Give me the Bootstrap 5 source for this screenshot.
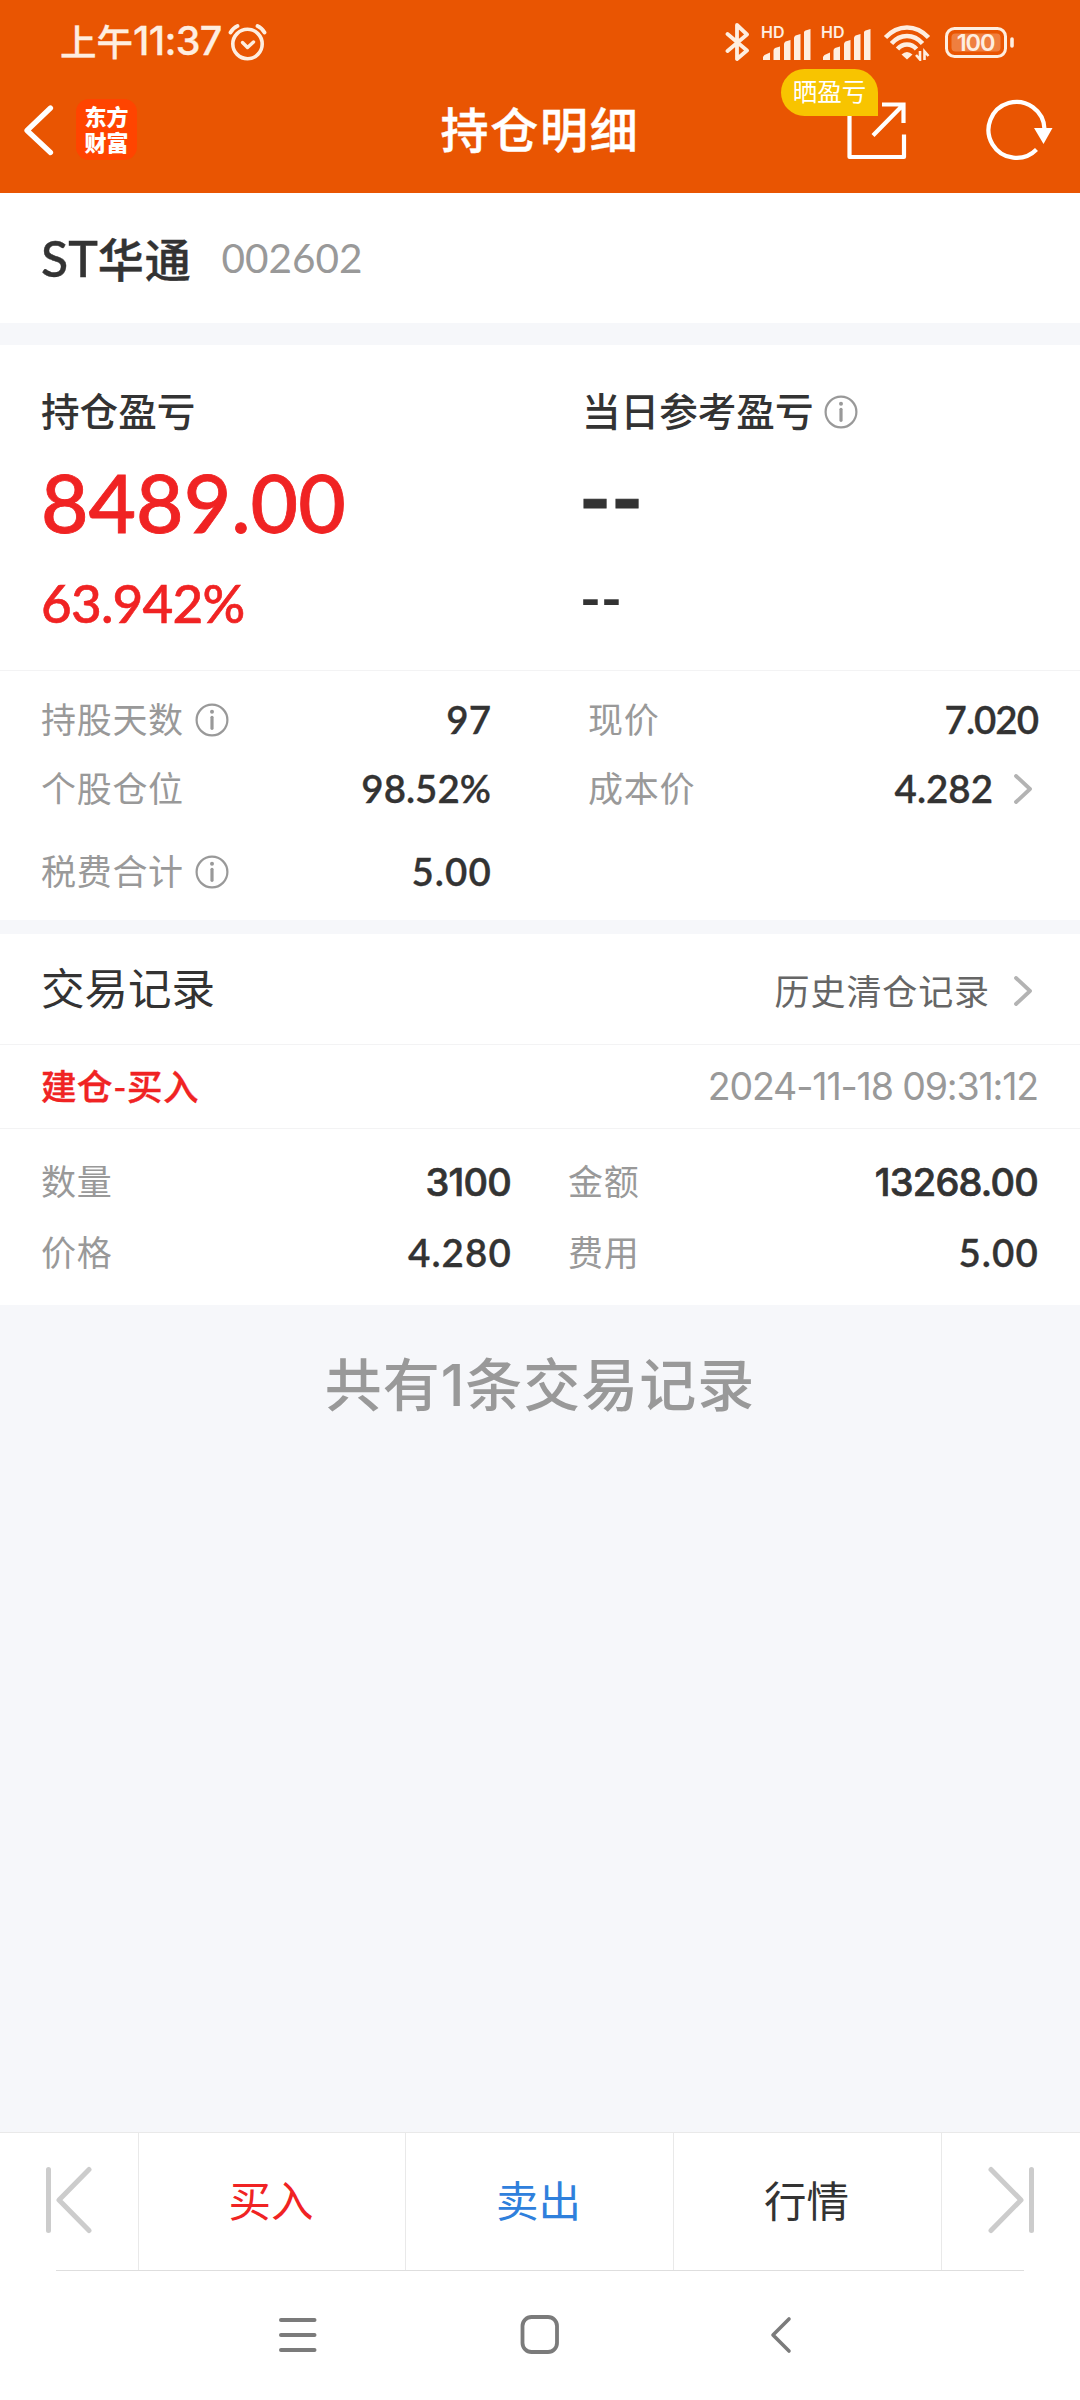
<!DOCTYPE html>
<html lang="zh-CN">
<head>
<meta charset="utf-8">
<meta name="viewport" content="width=device-width, initial-scale=1">
<title>持仓明细</title>
<link rel="stylesheet" href="https://cdn.jsdelivr.net/npm/bootstrap@5.3.0/dist/css/bootstrap.min.css">
<style>
body{font-family:Lato,"Noto Sans CJK SC",sans-serif;color:#333;background:#f6f7fa;line-height:1;font-size:35px}
svg{display:block;flex:none}
.app{width:1080px;height:2400px;overflow:hidden;white-space:nowrap}
.inter{font-family:Inter,"Noto Sans CJK SC",sans-serif}
.w5{font-weight:500}
.red{color:#f02323}
.ink-grey{color:#999}
.edge{padding-left:41px;padding-right:42px}
.rule{height:1px;background:#f3f3f4}
/* header */
.topzone{background:#e95502}
.statusbar{height:84px;color:#feeee0;padding-left:60px;padding-right:66px}
.clock{font-size:36.5px;-webkit-text-stroke:.3px currentColor}
.clock b{font-size:39.5px;font-weight:500;letter-spacing:-.7px}
.alarm{margin-left:5px}
.status-icons .sig,.status-icons .bluetooth{margin-right:10px}
.sig{width:50px;height:37px}
.sig span{font-size:16px;font-weight:600;left:0;top:0;line-height:16px}
.wifi{margin:0 14px 0 2px}
.battery{width:69px;height:31px}
.battery span{font-size:23.5px;font-weight:600;letter-spacing:-1.1px;left:0;width:61px;top:4px}
.titlebar{height:127px;margin-top:-18px;color:#fff}
.titlebar .side{flex:1 1 0}
.pagename{font-size:48px;letter-spacing:1.8px;-webkit-text-stroke:.4px currentColor}
.back{margin-left:22px}
.applogo{width:61px;height:61px;border-radius:13px;background:#ff4400;font-size:22px;line-height:26px;font-weight:900;margin-left:22px}
.share-tag{right:29px;top:-31px;width:97px;height:47px;border-radius:24px 24px 0 24px;background:#f8c400;font-size:24.5px}
.reload{margin-left:78px;margin-right:27px}
/* stock name */
.stockline{height:130px;gap:30px}
.stockline h1{font-size:46px;line-height:1;letter-spacing:.8px;-webkit-text-stroke:.4px currentColor}
.stockline h1 span{font-size:50px;letter-spacing:0}
.code{font-size:40.5px}
/* summary */
.summary{margin-top:22px;padding-left:41px}
.half{width:541px;flex:none}
.half+.half{width:auto;flex:1}
.cap-line{height:133px;font-size:38.6px}
.big-line{height:52px;font-size:82px;padding-bottom:6px;-webkit-text-stroke:.8px currentColor}
.pct-line{height:140px;font-size:53px;letter-spacing:-.8px;padding-top:5px;-webkit-text-stroke:.6px currentColor}
.big-line.dash{font-weight:700;padding-bottom:14px;font-size:86px;margin-left:-3px}
.pct-line.dash{font-weight:700;padding-bottom:10px;font-size:56px;letter-spacing:0;margin-left:-2px;-webkit-text-stroke:0}
/* key figures */
.kv{width:450px;height:69px}
.kv .ink-grey{letter-spacing:.7px}
.kv.tall{height:97px}
.num{font-size:38.5px;font-weight:600;-webkit-text-stroke:.3px currentColor}
.num.tight{letter-spacing:-1px}
.num.loose{letter-spacing:1.1px;margin-right:-.9px}
.num.inter{font-size:38px;font-weight:500;letter-spacing:-.8px;-webkit-text-stroke:.7px currentColor}
.info{margin-left:11px}
.go{margin:0 6px 0 21px}
.deal{padding-top:17px;padding-bottom:17px}
.deal .kv{width:470px;height:71px}
.band{height:14px}
.rec-head{height:110px}
.rec-title{font-size:43.5px}
.rec-more{color:#666;padding-top:4px;letter-spacing:.9px}
.rec-head .go{margin:4px 6px 0 24px}
.rec-sub{height:83px}
.rec-type{font-size:35.5px;letter-spacing:.6px;-webkit-text-stroke:.4px currentColor}
.rec-time{font-size:37.5px;letter-spacing:-1.15px}
.total{padding-top:52px;font-size:57px;letter-spacing:1px}
/* footer */
.footbar{height:138px;border-top:1px solid #e9e9e9;font-size:42.5px}
.footbar>*+*{border-left:1px solid #e9e9e9}
.footbar>.edgebtn{width:138px;padding-left:45px;padding-bottom:4px}
.footbar>.act{width:268px;padding-right:2px}
.footbar>.act:nth-child(2){width:267px}
.sell{color:#2f80dc}
.footrule{height:1px;margin:0 56px;background:#dedede}
.sysnav{height:129px;padding-left:278px;padding-bottom:1px}
.home-key{margin-left:201px}
.back-key{margin-left:208px}
</style>
</head>
<body>
<svg width="0" height="0" class="position-absolute">
  <symbol id="info" viewBox="0 0 34 34"><circle cx="17" cy="17" r="15.4" fill="none" stroke="#999" stroke-width="2.2"/><circle cx="17" cy="8.7" r="2" fill="#999"/><path d="M17 14.3v11" stroke="#999" stroke-width="3.2" stroke-linecap="round"/></symbol>
  <symbol id="go" viewBox="0 0 18 30"><path d="M2 2l14 13L2 28" fill="none" stroke="#b3b3b3" stroke-width="3.8" stroke-linecap="round" stroke-linejoin="round"/></symbol>
  <symbol id="bars" viewBox="0 0 50 37"><path d="M2 33.500Q2 32 3.500 31L9 28.500V36H2zM12.500 26.500Q12.500 25 14 24L19 22.500V36H12.500zM23 20Q23 18.500 24.500 17.500L29.500 16V36H23zM33 14Q33 12.500 34.500 11.500L39.500 10V36H33zM43 8.500Q43 7 44.500 6.500L49.500 5V36H43z" fill="#feeee0"/></symbol>
</svg>
<div class="app d-flex flex-column">
  <header class="topzone">
    <div class="statusbar d-flex align-items-center">
      <div class="clock d-flex align-items-center w5"><span>上午</span><b class="inter">11:37</b></div>
      <svg class="alarm" width="40" height="40" viewBox="0 0 40 40" fill="none" stroke="#feeee0"><circle cx="20.500" cy="22" r="14.700" stroke-width="3.600"/><path d="M3.500 10.500Q6 6 10.500 4M37.500 10.500Q35 6 30.500 4" stroke-width="3.800" stroke-linecap="round"/><path d="M15.500 20.500l5 5 6-5.500" stroke-width="3.400" stroke-linecap="round" stroke-linejoin="round"/></svg>
      <div class="status-icons d-flex align-items-center ms-auto">
        <svg class="bluetooth" width="26" height="40" viewBox="0 0 26 40" fill="none" stroke="#feeee0" stroke-width="3.800" stroke-linecap="round" stroke-linejoin="round"><path d="M2.500 12L22 28.500 12 37V3L22 12.500 2.500 29"/></svg>
        <div class="sig position-relative"><svg width="50" height="37"><use href="#bars"/></svg><span class="position-absolute inter">HD</span></div>
        <div class="sig position-relative"><svg width="50" height="37"><use href="#bars"/></svg><span class="position-absolute inter">HD</span></div>
        <svg class="wifi" width="48" height="38" viewBox="0 0 48 38" fill="none" stroke="#feeee0" stroke-width="4.600"><path d="M2.500 14.500Q12 4.500 24 4.500T45.500 14.500M8.500 20.500Q15 13 24 13T39.500 20.500M14.500 26Q18.500 21.500 24 21.500T33.500 26"/><path d="M18.500 31.500Q24 26.500 29.500 31.500L24 36.500z" fill="#feeee0" stroke="none"/><path d="M37 28v8.500l-4-4.500M41.500 37V28.500l4 4.500" stroke-width="2.600"/></svg>
        <div class="battery position-relative"><svg width="69" height="31" viewBox="0 0 69 31"><rect x="1.500" y="1.500" width="59" height="28" rx="8" fill="none" stroke="#feeee0" stroke-width="3"/><rect x="6.500" y="6.500" width="49" height="18" rx="4" fill="#feeee0" fill-opacity=".28"/><path d="M67 12v7" stroke="#feeee0" stroke-width="3.600" stroke-linecap="round"/></svg><span class="position-absolute text-center inter">100</span></div>
      </div>
    </div>
    <div class="titlebar d-flex align-items-center">
      <div class="side d-flex align-items-center">
        <svg class="back" width="32" height="52" viewBox="0 0 32 52"><path d="M28.500 4L5 26.500 28.500 48.500" fill="none" stroke="#fff" stroke-width="5.200" stroke-linecap="round" stroke-linejoin="round"/></svg>
        <div class="applogo d-flex flex-column align-items-center justify-content-center"><span>东方</span><span>财富</span></div>
      </div>
      <div class="pagename w5">持仓明细</div>
      <div class="side d-flex align-items-center justify-content-end">
        <div class="position-relative">
          <svg width="60" height="60" viewBox="0 0 60 60" fill="none" stroke="#fff" stroke-width="4.200"><path d="M2.500 2V57H57V34.500" stroke-linejoin="round"/><path d="M35 4.500H56.500V23M56 5L26 35.500"/></svg>
          <div class="share-tag position-absolute d-flex align-items-center justify-content-center">晒盈亏</div>
        </div>
        <svg class="reload" width="68" height="62" viewBox="0 0 68 62"><path d="M59.500 30A28 28 0 1 0 51.500 50.500" fill="none" stroke="#fff" stroke-width="4.200"/><path d="M49 29H67.500L58.500 45z" fill="#fff"/></svg>
      </div>
    </div>
  </header>

  <section class="stockline edge bg-white d-flex align-items-center">
    <h1 class="w5 mb-0"><span>ST</span>华通</h1><span class="code ink-grey">002602</span>
  </section>

  <section class="summary bg-white d-flex">
    <div class="half">
      <div class="cap-line d-flex align-items-center w5">持仓盈亏</div>
      <div class="big-line red w5 d-flex align-items-center">8489.00</div>
      <div class="pct-line red w5 d-flex align-items-center">63.942%</div>
    </div>
    <div class="half">
      <div class="cap-line d-flex align-items-center w5">当日参考盈亏<svg class="info" width="34" height="34"><use href="#info"/></svg></div>
      <div class="big-line dash d-flex align-items-center">--</div>
      <div class="pct-line dash d-flex align-items-center">--</div>
    </div>
  </section>
  <div class="rule"></div>

  <section class="edge bg-white" style="padding-top:14px">
    <div class="d-flex justify-content-between">
      <div class="kv d-flex align-items-center"><span class="ink-grey">持股天数</span><svg class="info" width="34" height="34"><use href="#info"/></svg><span class="num ms-auto">97</span></div>
      <div class="kv d-flex align-items-center"><span class="ink-grey">现价</span><span class="num tight ms-auto">7.020</span></div>
    </div>
    <div class="d-flex justify-content-between">
      <div class="kv d-flex align-items-center"><span class="ink-grey">个股仓位</span><span class="num ms-auto">98.52%</span></div>
      <div class="kv d-flex align-items-center"><span class="ink-grey">成本价</span><span class="num ms-auto">4.282</span><svg class="go" width="18" height="30"><use href="#go"/></svg></div>
    </div>
    <div class="kv tall d-flex align-items-center"><span class="ink-grey">税费合计</span><svg class="info" width="34" height="34"><use href="#info"/></svg><span class="num loose ms-auto">5.00</span></div>
  </section>
  <div class="band"></div>

  <section class="bg-white">
    <div class="rec-head edge d-flex align-items-center"><span class="rec-title">交易记录</span><span class="rec-more ms-auto">历史清仓记录</span><svg class="go" width="18" height="30"><use href="#go"/></svg></div>
    <div class="rule"></div>
    <div class="rec-sub edge d-flex align-items-center"><span class="rec-type red w5">建仓-买入</span><span class="rec-time inter ink-grey ms-auto">2024-11-18 09:31:12</span></div>
    <div class="rule"></div>
    <div class="deal edge">
      <div class="d-flex justify-content-between">
        <div class="kv d-flex align-items-center"><span class="ink-grey">数量</span><span class="num inter ms-auto">3100</span></div>
        <div class="kv d-flex align-items-center"><span class="ink-grey">金额</span><span class="num inter ms-auto">13268.00</span></div>
      </div>
      <div class="d-flex justify-content-between">
        <div class="kv d-flex align-items-center"><span class="ink-grey">价格</span><span class="num loose ms-auto">4.280</span></div>
        <div class="kv d-flex align-items-center"><span class="ink-grey">费用</span><span class="num loose ms-auto">5.00</span></div>
      </div>
    </div>
  </section>

  <main class="total inter flex-grow-1 text-center ink-grey w5">共有1条交易记录</main>

  <footer class="bg-white">
    <div class="footbar d-flex">
      <div class="edgebtn d-flex align-items-center"><svg width="48" height="68" viewBox="0 0 48 68" fill="none" stroke="#ccc" stroke-width="5" stroke-linecap="round" stroke-linejoin="round"><path d="M3.500 3.500V64.500M44 3.500L14 34 44 64.500"/></svg></div>
      <div class="act red d-flex align-items-center justify-content-center">买入</div>
      <div class="act sell d-flex align-items-center justify-content-center">卖出</div>
      <div class="act d-flex align-items-center justify-content-center">行情</div>
      <div class="edgebtn d-flex align-items-center"><svg width="48" height="68" viewBox="0 0 48 68" fill="none" stroke="#ccc" stroke-width="5" stroke-linecap="round" stroke-linejoin="round"><path d="M44.500 3.500V64.500M4 3.500L34 34 4 64.500"/></svg></div>
    </div>
    <div class="footrule"></div>
    <div class="sysnav d-flex align-items-center">
      <svg width="40" height="40" viewBox="0 0 40 40" stroke="#7b7b7b" stroke-width="4" stroke-linecap="round"><path d="M3 5H36.500M3 20H36.500M3 35H36.500"/></svg>
      <svg class="home-key" width="42" height="42" viewBox="0 0 42 42" fill="none" stroke="#7b7b7b" stroke-width="3.800"><rect x="3.500" y="3" width="34.500" height="35" rx="9"/></svg>
      <svg class="back-key" width="26" height="40" viewBox="0 0 26 40" fill="none" stroke="#7b7b7b" stroke-width="3.600" stroke-linecap="round" stroke-linejoin="round"><path d="M20 4L4 20 20 36"/></svg>
    </div>
  </footer>
</div>
<script src="https://cdn.jsdelivr.net/npm/bootstrap@5.3.0/dist/js/bootstrap.bundle.min.js"></script>
</body>
</html>
